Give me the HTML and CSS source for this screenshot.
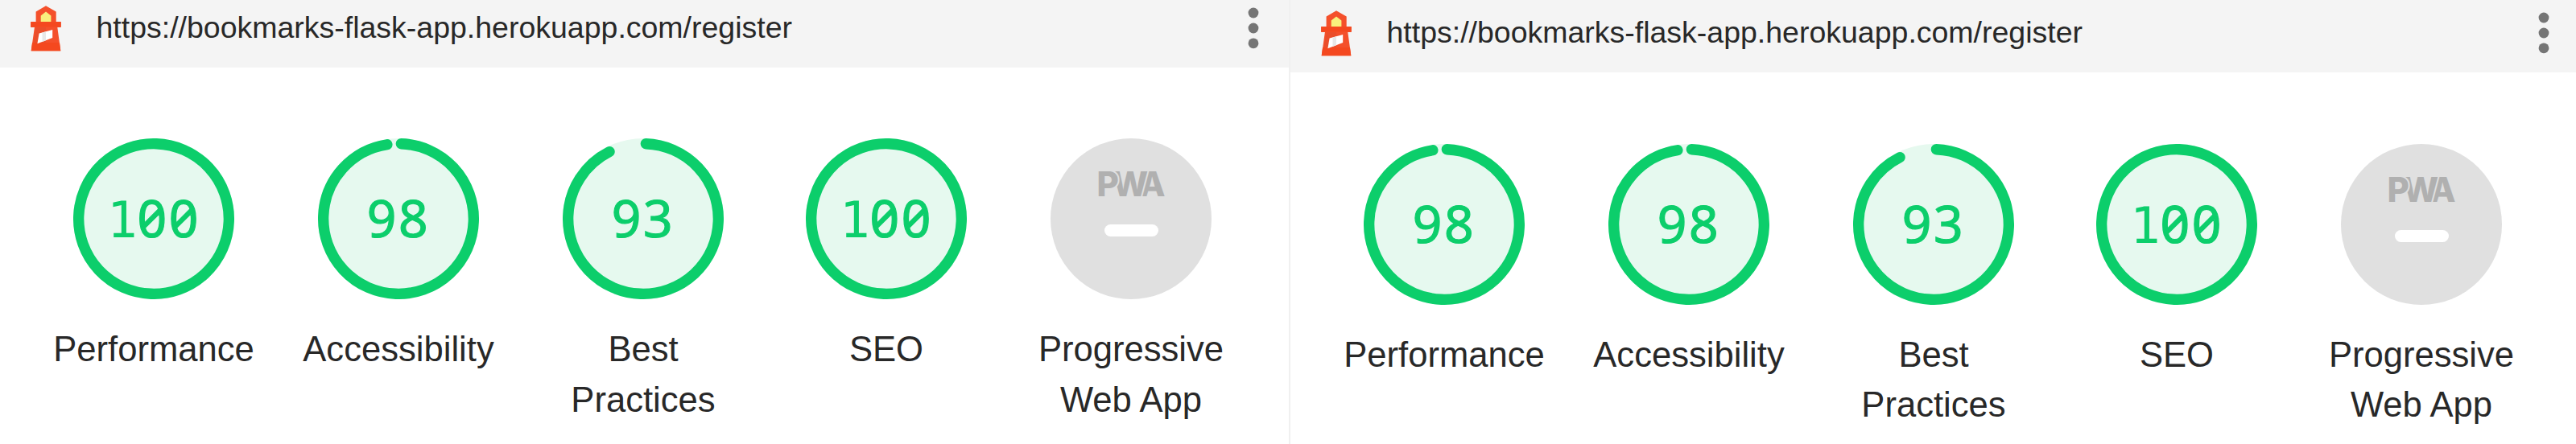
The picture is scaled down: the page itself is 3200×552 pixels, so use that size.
FILE: index.html
```html
<!DOCTYPE html>
<html lang="en">
<head>
<meta charset="utf-8">
<title>Lighthouse reports</title>
<link rel="stylesheet" href="styles.css">
</head>
<body>
<svg class="defs" aria-hidden="true">
  <symbol id="lighthouse" viewBox="0 0 38 57">
    <path fill="#f4502b" d="M19 .2 31.7 7.6V20H37.7V27H33.3L37.3 56.3H.7L4.9 27H.2V20H6.6V7.6Z"/>
    <path fill="#e04c2c" opacity=".5" d="M7 27H19V56H1.5Z"/>
    <path fill="#f9f17d" d="M19 7.6 25.4 12.4V20H12.7V12.4Z"/>
    <path fill="#f4481f" d="M.2 20.3H37.7V26.5H.2ZM2 46H36L37.3 56.3H.7Z"/>
    <path fill="#fff" d="M10.6 34.6 27.2 30V40L8.4 47.2Z"/>
    <path fill="#e8e8e8" d="M14.5 33.5 19 32.3V43.2L14.5 44.9Z"/>
  </symbol>
  <symbol id="dots" viewBox="0 0 14 52">
    <circle cx="7" cy="7" r="6.4"/><circle cx="7" cy="26" r="6.4"/><circle cx="7" cy="44.8" r="6.4"/>
  </symbol>
</svg>
<main class="reports">
  <section class="report">
    <header class="topbar">
      <svg class="logo"><use href="#lighthouse"/></svg>
      <span class="url">https://bookmarks-flask-app.herokuapp.com/register</span>
      <svg class="menu"><use href="#dots"/></svg>
    </header>
    <div class="gauges">
      <div class="gauge"><div class="dial"><svg class="ring" viewBox="0 0 120 120"><circle class="base" cx="60" cy="60" r="60"/><circle class="arc" cx="60" cy="60" r="56"/></svg><span class="score"><span class="one">1</span>00</span></div><span class="label">Performance</span></div>
      <div class="gauge"><div class="dial"><svg class="ring" viewBox="0 0 120 120"><circle class="base" cx="60" cy="60" r="60"/><circle class="arc" cx="60" cy="60" r="56" stroke-dasharray="340.8 352"/></svg><span class="score">98</span></div><span class="label">Accessibility</span></div>
      <div class="gauge"><div class="dial"><svg class="ring" viewBox="0 0 120 120"><circle class="base" cx="60" cy="60" r="60"/><circle class="arc" cx="60" cy="60" r="56" stroke-dasharray="323.2 352"/></svg><span class="score">93</span></div><span class="label">Best<br>Practices</span></div>
      <div class="gauge"><div class="dial"><svg class="ring" viewBox="0 0 120 120"><circle class="base" cx="60" cy="60" r="60"/><circle class="arc" cx="60" cy="60" r="56"/></svg><span class="score"><span class="one">1</span>00</span></div><span class="label">SEO</span></div>
      <div class="gauge"><div class="dial pwa"><div class="pwa-logo"><span class="p">P</span><span class="w">W</span><span class="a">A</span></div><div class="dash"></div></div><span class="label">Progressive<br>Web App</span></div>
    </div>
  </section>
  <section class="report second">
    <header class="topbar">
      <svg class="logo"><use href="#lighthouse"/></svg>
      <span class="url">https://bookmarks-flask-app.herokuapp.com/register</span>
      <svg class="menu"><use href="#dots"/></svg>
    </header>
    <div class="gauges">
      <div class="gauge"><div class="dial"><svg class="ring" viewBox="0 0 120 120"><circle class="base" cx="60" cy="60" r="60"/><circle class="arc" cx="60" cy="60" r="56" stroke-dasharray="340.8 352"/></svg><span class="score">98</span></div><span class="label">Performance</span></div>
      <div class="gauge"><div class="dial"><svg class="ring" viewBox="0 0 120 120"><circle class="base" cx="60" cy="60" r="60"/><circle class="arc" cx="60" cy="60" r="56" stroke-dasharray="340.8 352"/></svg><span class="score">98</span></div><span class="label">Accessibility</span></div>
      <div class="gauge"><div class="dial"><svg class="ring" viewBox="0 0 120 120"><circle class="base" cx="60" cy="60" r="60"/><circle class="arc" cx="60" cy="60" r="56" stroke-dasharray="323.2 352"/></svg><span class="score">93</span></div><span class="label">Best<br>Practices</span></div>
      <div class="gauge"><div class="dial"><svg class="ring" viewBox="0 0 120 120"><circle class="base" cx="60" cy="60" r="60"/><circle class="arc" cx="60" cy="60" r="56"/></svg><span class="score"><span class="one">1</span>00</span></div><span class="label">SEO</span></div>
      <div class="gauge"><div class="dial pwa"><div class="pwa-logo"><span class="p">P</span><span class="w">W</span><span class="a">A</span></div><div class="dash"></div></div><span class="label">Progressive<br>Web App</span></div>
    </div>
  </section>
</main>
</body>
</html>
```
FILE: styles.css
```css
* { box-sizing: border-box; }
body {
  margin: 0;
  background: #fff;
  color: #282828;
  font-family: "Liberation Sans", Arial, sans-serif;
  overflow: hidden;
}
.defs { display: none; }
.reports {
  display: grid;
  grid-template-columns: 1601px 1599px;
  height: 552px;
}
.report { background: #fff; overflow: hidden; }
.second { border-left: 2px solid #f0f0f0; }
.topbar {
  display: flex;
  align-items: flex-start;
  height: 84px;
  padding: 7px 37px 0 38px;
  background: #f4f4f4;
}
.second .topbar { height: 90px; padding-top: 13px; padding-right: 33px; }
.logo { width: 38px; height: 57px; }
.url {
  margin-left: 43.5px;
  padding-top: 6px;
  font-size: 37.5px;
  line-height: 42px;
  letter-spacing: -0.01px;
  white-space: nowrap;
}
.menu {
  width: 14px;
  height: 52px;
  margin-left: auto;
  margin-top: 2px;
  fill: #757575;
}
.gauges {
  display: grid;
  grid-template-columns: 304px 304px 304px 300px 308px;
  padding: 88px 0 0 39px;
}
.second .gauges { padding-top: 88.6px; }
.gauge { display: flex; flex-direction: column; align-items: center; }
.dial {
  display: grid;
  place-items: center;
  width: 200px;
  height: 200px;
}
.ring, .score { grid-area: 1 / 1; }
.ring { width: 200px; height: 200px; }
.base { fill: #e6f9ef; }
.arc {
  fill: none;
  stroke: #0cce6b;
  stroke-width: 8;
  stroke-linecap: round;
  transform: rotate(-87.95deg);
  transform-origin: 60px 60px;
}
.score {
  color: #0cce6b;
  font-family: "Noto Sans", sans-serif;
  font-size: 64px;
  line-height: 90px;
  letter-spacing: 2.6px;
  font-feature-settings: "zero" 1;
  -webkit-text-stroke: 1.2px #0cce6b;
  margin-top: -2px;
  white-space: nowrap;
}
.one {
  font-family: "DejaVu Sans Mono", monospace;
  font-size: 62.5px;
  line-height: 1;
  letter-spacing: 0;
  -webkit-text-stroke: 0;
}
.label {
  margin-top: 31px;
  font-size: 43.6px;
  line-height: 62.6px;
  text-align: center;
}
.pwa {
  align-content: start;
  gap: 30px;
  padding-top: 41px;
  border-radius: 50%;
  background: #e0e0e0;
}
.pwa-logo {
  display: flex;
  height: 36px;
  color: #b0b0b0;
  font-family: Inter, sans-serif;
  font-size: 42px;
  font-weight: 800;
  line-height: 31px;
  -webkit-text-stroke: 4px #e0e0e0;
  paint-order: stroke fill;
}
.pwa-logo span { position: relative; }
.p { z-index: 3; }
.w { z-index: 2; margin-left: -8px; }
.a { z-index: 1; margin-left: -11px; }
.dash { width: 67px; height: 15px; border-radius: 8px; background: #fff; }
```
